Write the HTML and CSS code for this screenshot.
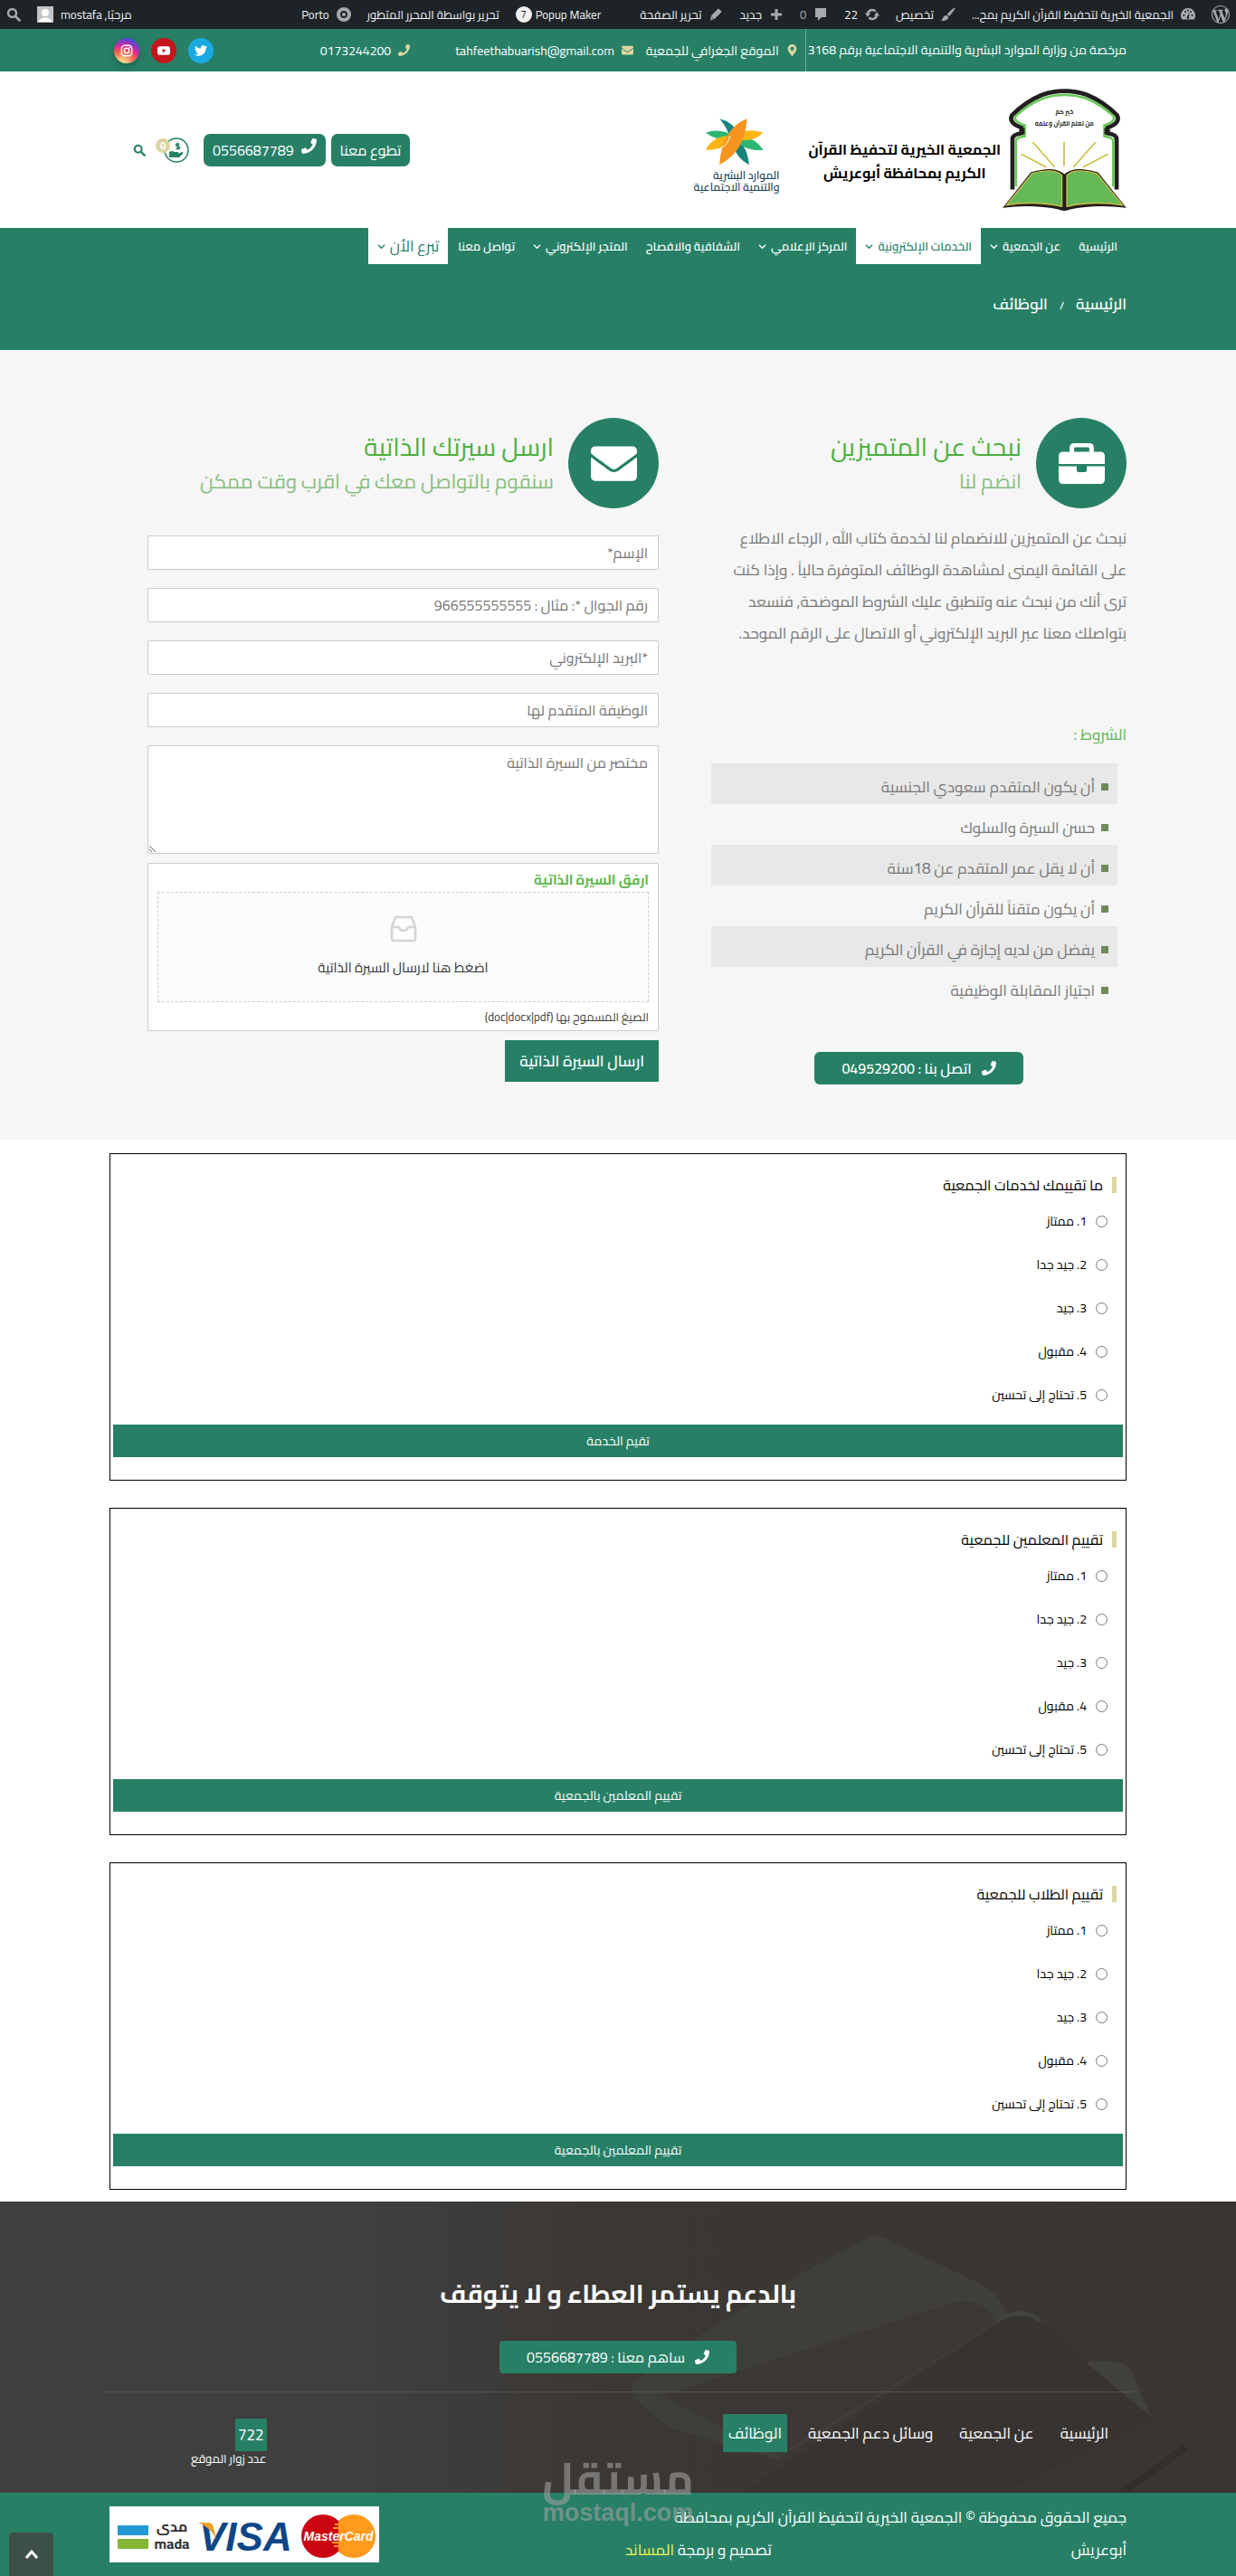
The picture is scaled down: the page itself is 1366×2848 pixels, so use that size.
FILE: index.html
```
<!DOCTYPE html>
<html lang="ar" dir="rtl">
<head>
    <meta charset="utf-8">
    <meta name="viewport" content="width=device-width, initial-scale=1">
    <title>الوظائف - الجمعية الخيرية لتحفيظ القرآن الكريم</title>
    <link rel="stylesheet" href="styles.css">
</head>
<body>
    <svg class="sprite" aria-hidden="true">
        <symbol id="i-phone" viewBox="0 0 512 512"><path d="M493.4 24.6l-104-24c-11.3-2.6-22.9 3.3-27.5 13.9l-48 112c-4.2 9.8-1.4 21.3 6.9 28l60.6 49.6c-36 76.7-98.9 140.5-177.2 177.2l-49.6-60.6c-6.8-8.3-18.2-11.1-28-6.9l-112 48C3.9 366.5-2 378.1.6 389.4l24 104C27.1 504.2 36.7 512 48 512c256.1 0 464-207.5 464-464 0-11.2-7.7-20.9-18.6-23.4z"/></symbol>
        <symbol id="i-mail" viewBox="0 0 512 512"><path d="M502.3 190.8c3.9-3.1 9.7-.2 9.7 4.7V400c0 26.5-21.5 48-48 48H48c-26.5 0-48-21.5-48-48V195.6c0-5 5.7-7.8 9.7-4.7 22.4 17.4 52.1 39.5 154.1 113.6 21.1 15.4 56.7 47.8 92.2 47.6 35.7.3 72-32.8 92.3-47.6 102-74.1 131.6-96.3 154-113.7zM256 320c23.2.4 56.6-29.2 73.4-41.4 132.7-96.3 142.8-104.7 173.4-128.7 5.8-4.5 9.2-11.5 9.2-18.9v-19c0-26.5-21.5-48-48-48H48c-26.5 0-48 21.5-48 48v19c0 7.4 3.4 14.3 9.2 18.9 30.6 23.9 40.7 32.4 173.4 128.7 16.8 12.2 50.2 41.8 73.4 41.4z"/></symbol>
        <symbol id="i-down" viewBox="0 0 10 10"><path d="M1 3l4 4 4-4" fill="none" stroke="currentColor" stroke-width="1.5"/></symbol>
        <symbol id="i-search" viewBox="0 0 16 16"><circle cx="6.5" cy="6.5" r="4.5" fill="none" stroke="currentColor" stroke-width="2.4"/><path d="M10 10l4.5 4.5" stroke="currentColor" stroke-width="2.8" stroke-linecap="round"/></symbol>
    </svg>

    <div class="adminbar">
        <a href="#" aria-label="ووردبريس"><svg class="ic20" viewBox="0 0 20 20"><path d="M20 10c0-5.510-4.490-10-10-10C4.480 0 0 4.490 0 10c0 5.520 4.480 10 10 10 5.510 0 10-4.480 10-10zM7.780 15.370L4.370 6.220c.550-.020 1.170-.080 1.170-.080.500-.060.440-1.130-.060-1.110 0 0-1.450.110-2.370.110-.180 0-.370 0-.580-.010C4.120 2.690 6.870 1.110 10 1.110c2.330 0 4.450.870 6.050 2.340-.680-.110-1.650.390-1.650 1.580 0 .740.450 1.360.900 2.100.350.610.550 1.360.550 2.460 0 1.490-1.400 5-1.400 5l-3.030-8.370c.540-.020.820-.170.820-.170.500-.050.440-1.250-.060-1.220 0 0-1.440.120-2.380.120-.870 0-2.330-.120-2.330-.120-.500-.030-.560 1.200-.060 1.220l.920.080 1.260 3.410zM17.410 10c.240-.640.740-1.870.430-4.250.700 1.290 1.050 2.710 1.050 4.250 0 3.290-1.730 6.240-4.400 7.780.970-2.590 1.940-5.200 2.920-7.780zM6.100 18.090C3.120 16.650 1.110 13.530 1.110 10c0-1.300.230-2.480.720-3.590C3.250 10.300 4.670 14.200 6.100 18.090zm4.030-6.630l2.580 6.980c-.860.290-1.760.450-2.710.450-.790 0-1.570-.110-2.290-.330.810-2.380 1.620-4.740 2.420-7.100z"/></svg></a>
        <a href="#"><svg class="ic" viewBox="0 0 16 16"><path d="M8 1a8 8 0 0 0-6.600 12.500h13.200A8 8 0 0 0 8 1z"/><g fill="#1d2327"><circle cx="3.500" cy="9" r="1"/><circle cx="5" cy="5" r="1"/><circle cx="8" cy="3.500" r="1"/><circle cx="11" cy="5" r="1"/><circle cx="12.500" cy="9" r="1"/><path d="M9.500 5.500L9 11a1.300 1.300 0 1 1-2-.500z"/></g></svg>الجمعية الخيرية لتحفيظ القرآن الكريم بمح...</a>
        <a href="#"><svg class="ic" viewBox="0 0 16 16"><path d="M15.500.500c.8.800-4 7-6.500 9.500L6.500 8C9 5 14.700-.300 15.500.500zM5.800 8.800l2.400 2.200C8 14 4 15.500 0 15c2-1.500 2-5.500 5.800-6.200z"/></svg>تخصيص</a>
        <a href="#"><svg class="ic" viewBox="0 0 16 16"><path d="M3 7a5 5 0 0 1 8.500-2.500M13 9a5 5 0 0 1-8.500 2.500" fill="none" stroke="currentColor" stroke-width="2.600"/><path d="M0 6.500h6L3 11zM10 9.500h6L13 5z"/></svg>22</a>
        <a class="dim" href="#"><svg class="ic" viewBox="0 0 16 16"><path d="M2 1h12v10H9l-4 4v-4H2z"/></svg>0</a>
        <a href="#"><svg class="ic" viewBox="0 0 16 16"><path d="M6.500 2h3v4.500H14v3H9.500V14h-3V9.500H2v-3h4.500z"/></svg>جديد</a>
        <a href="#"><svg class="ic" viewBox="0 0 16 16"><path d="M11 1l4 4-8 8-5.500 2L3 9zM4 11l1.500 1.500" stroke="#1d2327" stroke-width=".6"/></svg>تحرير الصفحة</a>
        <a class="popup" href="#">Popup Maker<span class="num">7</span></a>
        <a href="#">تحرير بواسطة المحرر المتطور</a>
        <a href="#"><svg class="ic" viewBox="0 0 16 16"><circle cx="8" cy="8" r="6" fill="none" stroke="currentColor" stroke-width="4"/><circle cx="8" cy="8" r="2"/></svg>Porto</a>
        <a class="me" href="#">مرحبًا, mostafa<svg class="avatar" viewBox="0 0 18 18"><path d="M0 0h18v18H0z" fill="#c3c4c7"/><circle cx="9" cy="7" r="4" fill="#fff"/><path d="M2 17c0-6 14-6 14 0z" fill="#fff"/></svg></a>
        <a href="#" aria-label="بحث"><svg class="ic"><use href="#i-search"/></svg></a>
    </div>

    <div class="topbar">
        <div class="wrap topbar-row">
            <span class="licence">مرخصة من وزارة الموارد البشرية والتنمية الاجتماعية برقم 3168</span>
            <a class="place" href="#"><svg viewBox="0 0 384 512"><path d="M172.268 501.670C26.970 291.031 0 269.413 0 192 0 85.961 85.961 0 192 0s192 85.961 192 192c0 77.413-26.970 99.031-172.268 309.670-9.535 13.774-29.930 13.773-39.464 0zM192 272c44.183 0 80-35.817 80-80s-35.817-80-80-80-80 35.817-80 80 35.817 80 80 80z"/></svg>الموقع الجغرافي للجمعية</a>
            <a class="email" href="#"><svg><use href="#i-mail"/></svg>tahfeethabuarish@gmail.com</a>
            <a class="tel" href="#"><svg><use href="#i-phone"/></svg>0173244200</a>
            <div class="social">
                <a class="tw" href="#" aria-label="تويتر"><svg viewBox="0 0 512 512"><path d="M459.370 151.716c.325 4.548.325 9.097.325 13.645 0 138.720-105.583 298.558-298.558 298.558-59.452 0-114.680-17.219-161.137-47.106 8.447.974 16.568 1.299 25.340 1.299 49.055 0 94.213-16.568 130.274-44.832-46.132-.975-84.792-31.188-98.112-72.772 6.498.974 12.995 1.624 19.818 1.624 9.421 0 18.843-1.300 27.614-3.573-48.081-9.747-84.143-51.980-84.143-102.985v-1.299c13.969 7.797 30.214 12.670 47.431 13.319-28.264-18.843-46.781-51.005-46.781-87.391 0-19.492 5.197-37.360 14.294-52.954 51.655 63.675 129.300 105.258 216.365 109.807-1.624-7.797-2.599-15.918-2.599-24.040 0-57.828 46.782-104.934 104.934-104.934 30.213 0 57.502 12.670 76.670 33.137 23.715-4.548 46.456-13.320 66.599-25.340-7.798 24.366-24.366 44.833-46.132 57.827 21.117-2.273 41.584-8.122 60.426-16.243-14.292 20.791-32.161 39.308-52.628 54.253z"/></svg></a>
                <a class="yt" href="#" aria-label="يوتيوب"><svg viewBox="0 0 16 16"><rect x="0" y="2.500" width="16" height="11" rx="3"/><path d="M6.500 5.500v5l4-2.500z" fill="#c4161c"/></svg></a>
                <a class="ig" href="#" aria-label="انستقرام"><svg viewBox="0 0 16 16"><rect x="1.500" y="1.500" width="13" height="13" rx="4" fill="none" stroke="#fff" stroke-width="1.600"/><circle cx="8" cy="8" r="3.200" fill="none" stroke="#fff" stroke-width="1.600"/><circle cx="11.800" cy="4.200" r="1"/></svg></a>
            </div>
        </div>
    </div>

    <header class="header">
        <div class="wrap header-row">
            <a href="#" aria-label="الجمعية الخيرية لتحفيظ القرآن الكريم"><svg class="logo" viewBox="0 0 405 400">
                <path d="M32 330V165Q32 150 62 146V128Q18 112 30 88Q75 42 130 20Q202-4 275 20Q330 42 375 88Q387 112 343 128V146Q373 150 373 165V330" fill="#fff" stroke="#231f20" stroke-width="14"/>
                <path d="M43 320V172Q43 160 72 156V120Q32 106 42 90Q85 50 134 31Q202 10 271 31Q320 50 363 90Q373 106 333 120V156Q362 160 362 172V320" fill="none" stroke="#6ac95b" stroke-width="8"/>
                <path d="M54 134l18-6v22l-18-5zM351 134l-18-6v22l18-5z" fill="#231f20"/>
                <path d="M201 175v79M98 175l72 82M304 175l-72 82M60 214l82 43M345 214l-82 43" stroke="#cdbf45" stroke-width="5"/>
                <path d="M0 390L92 274Q170 250 202 280Q234 250 312 274L405 390Q300 378 218 396Q202 404 186 396Q100 378 0 390z" fill="#231f20"/>
                <path d="M12 382L96 278Q170 258 194 284V386Q100 366 12 382zM393 382L308 278Q234 258 210 284V386Q300 366 393 382z" fill="#65b959" stroke="#cdbf45" stroke-width="4"/>
                <text x="202" y="82" text-anchor="middle" class="logo-text">خير كم</text>
                <text x="202" y="120" text-anchor="middle" class="logo-text">من تعلم القرآن وعلمه</text>
            </svg></a>
            <div class="name">الجمعية الخيرية لتحفيظ القرآن<br>الكريم بمحافظة أبوعريش</div>
            <div class="ministry">
                <svg viewBox="0 0 196 158">
                    <path d="M49 1Q95 12 120 60L88 74Q74 30 49 1zM92 80Q138 70 148 156Q100 130 92 80z" fill="#17847c"/>
                    <path d="M2 48Q50 30 100 60Q50 84 2 48zM98 68Q160 50 195 106Q130 110 98 68z" fill="#2cb673"/>
                    <path d="M2 106Q30 50 100 60Q80 104 2 106zM100 68Q130 26 195 48Q160 84 100 68z" fill="#fdb515"/>
                    <path d="M140 1Q56 36 48 156Q136 110 140 1z" fill="#f7941e"/>
                    <path d="M56 98Q76 88 84 58" fill="none" stroke="#fff" stroke-width="3"/>
                </svg>
                <p>الموارد البشرية<br>والتنمية الاجتماعية</p>
            </div>
            <div class="actions">
                <a class="btn" href="#">تطوع معنا</a>
                <a class="btn call" href="#"><svg><use href="#i-phone"/></svg>0556687789</a>
                <a class="cart" href="#" aria-label="سلة التبرعات"><svg viewBox="0 0 28 28"><circle cx="14" cy="14" r="13" fill="#fff" stroke="#278066" stroke-width="1.500"/><path d="M6 16q3-2 6 0h4q1 2-1 2h-3 4l4-2q2 0 1 2l-4 4H6z"/><path d="M17.500 7.500q-4-1.500-4 .800 0 1.200 2 1.500 2.200.300 2.200 1.500 0 2-4.200.700M15.500 5.500v8" fill="none" stroke="#278066" stroke-width="1.500"/></svg><span>0</span></a>
                <button class="find" type="button" aria-label="بحث"><svg><use href="#i-search"/></svg></button>
            </div>
        </div>
    </header>

    <nav class="nav">
        <div class="wrap nav-row">
            <a href="#">الرئيسية</a>
            <a href="#">عن الجمعية<svg><use href="#i-down"/></svg></a>
            <a class="on" href="#">الخدمات الإلكترونية<svg><use href="#i-down"/></svg></a>
            <a href="#">المركز الإعلامي<svg><use href="#i-down"/></svg></a>
            <a href="#">الشفافية والافصاح</a>
            <a href="#">المتجر الإلكتروني<svg><use href="#i-down"/></svg></a>
            <a href="#">تواصل معنا</a>
            <a class="on donate" href="#">تبرع الأن<svg><use href="#i-down"/></svg></a>
        </div>
    </nav>
    <div class="crumbs">
        <div class="wrap"><a href="#">الرئيسية</a><span>/</span>الوظائف</div>
    </div>

    <section class="jobs">
        <div class="wrap jobs-grid">
            <div>
                <div class="lead">
                    <span class="circle"><svg viewBox="0 0 512 450"><path d="M340 95V60q0-15-15-15H187q-15 0-15 15v35h-50V50q0-50 50-50h168q50 0 50 50v45h72q50 0 50 50v85H0v-85q0-50 50-50h72zM0 255h200v45q0 20 20 20h72q20 0 20-20v-45h200v145q0 50-50 50H50q-50 0-50-50z"/></svg></span>
                    <div>
                        <h2>نبحث عن المتميزين</h2>
                        <h3>انضم لنا</h3>
                    </div>
                </div>
                <p class="about">نبحث عن المتميزين للانضمام لنا لخدمة كتاب الله , الرجاء الاطلاع على القائمة اليمنى لمشاهدة الوظائف المتوفرة حالياً . وإذا كنت ترى أنك من نبحث عنه وتنطبق عليك الشروط الموضحة, فنسعد بتواصلك معنا عبر البريد الإلكتروني أو الاتصال على الرقم الموحد.</p>
                <h4>الشروط :</h4>
                <ul class="terms">
                    <li>أن يكون المتقدم سعودي الجنسية</li>
                    <li>حسن السيرة والسلوك</li>
                    <li>أن لا يقل عمر المتقدم عن 18سنة</li>
                    <li>أن يكون متقناً للقرآن الكريم</li>
                    <li>يفضل من لديه إجازة في القرآن الكريم</li>
                    <li>اجتياز المقابلة الوظيفية</li>
                </ul>
                <a class="phone-btn" href="#"><svg><use href="#i-phone"/></svg>اتصل بنا : 049529200</a>
            </div>
            <div>
                <div class="lead">
                    <span class="circle"><svg><use href="#i-mail"/></svg></span>
                    <div>
                        <h2>ارسل سيرتك الذاتية</h2>
                        <h3>سنقوم بالتواصل معك في اقرب وقت ممكن</h3>
                    </div>
                </div>
                <form class="cv">
                    <input type="text" aria-label="الإسم" placeholder="الإسم*">
                    <input type="text" aria-label="رقم الجوال" placeholder="رقم الجوال *: مثال : 966555555555">
                    <input type="text" aria-label="البريد الإلكتروني" placeholder="*البريد الإلكتروني">
                    <input type="text" aria-label="الوظيفة المتقدم لها" placeholder="الوظيفة المتقدم لها">
                    <textarea aria-label="مختصر من السيرة الذاتية" placeholder="مختصر من السيرة الذاتية"></textarea>
                    <div class="upload">
                        <strong>ارفق السيرة الذاتية</strong>
                        <label class="drop" for="cv">
                            <svg viewBox="0 0 30 30"><path d="M2 13L6 2h18l4 11v13q0 2-2 2H4q-2 0-2-2zM2 13h8q1 4 5 4t5-4h8" fill="none" stroke="#d4d4d4" stroke-width="2.600" stroke-linejoin="round"/></svg>
                            اضغط هنا لارسال السيرة الذاتية
                        </label>
                        <input type="file" id="cv" hidden>
                        <small>الصيغ المسموح بها (doc|docx|pdf)</small>
                    </div>
                    <button type="button">ارسال السيرة الذاتية</button>
                </form>
            </div>
        </div>
    </section>

    <main class="wrap polls">
        <form class="poll">
            <h5>ما تقييمك لخدمات الجمعية</h5>
            <label><input type="radio" name="p1">1. ممتاز</label>
            <label><input type="radio" name="p1">2. جيد جدا</label>
            <label><input type="radio" name="p1">3. جيد</label>
            <label><input type="radio" name="p1">4. مقبول</label>
            <label><input type="radio" name="p1">5. تحتاج إلى تحسين</label>
            <button type="button">تقيم الخدمة</button>
        </form>
        <form class="poll">
            <h5>تقييم المعلمين للجمعية</h5>
            <label><input type="radio" name="p2">1. ممتاز</label>
            <label><input type="radio" name="p2">2. جيد جدا</label>
            <label><input type="radio" name="p2">3. جيد</label>
            <label><input type="radio" name="p2">4. مقبول</label>
            <label><input type="radio" name="p2">5. تحتاج إلى تحسين</label>
            <button type="button">تقييم المعلمين بالجمعية</button>
        </form>
        <form class="poll">
            <h5>تقييم الطلاب للجمعية</h5>
            <label><input type="radio" name="p3">1. ممتاز</label>
            <label><input type="radio" name="p3">2. جيد جدا</label>
            <label><input type="radio" name="p3">3. جيد</label>
            <label><input type="radio" name="p3">4. مقبول</label>
            <label><input type="radio" name="p3">5. تحتاج إلى تحسين</label>
            <button type="button">تقييم المعلمين بالجمعية</button>
        </form>
    </main>

    <footer class="footer">
        <div class="support">
            <svg class="scene" viewBox="0 0 1366 322" preserveAspectRatio="xMidYMid slice" aria-hidden="true">
                <path d="M700 200Q820 110 968 36Q1040 70 1090 94Q1115 115 1113 128L860 285 740 250Q690 215 700 200z" fill="#424440" opacity=".6"/>
                <path d="M730 215L1060 110Q1095 112 1100 135L860 280z" fill="#3a3532" opacity=".7"/>
                <path d="M1113 128Q1130 118 1160 140L1275 240 1110 322H820z" fill="#373331"/>
                <path d="M1200 178Q1240 170 1252 190L1272 238z" fill="#42413e"/>
                <path d="M1105 130Q1130 116 1150 132" fill="none" stroke="#42423f" stroke-width="5"/>
                <path d="M1240 322L1310 272" stroke="#322e2c" stroke-width="8"/>
            </svg>
            <h2>بالدعم يستمر العطاء و لا يتوقف</h2>
            <a class="phone-btn" href="#"><svg><use href="#i-phone"/></svg>ساهم معنا : 0556687789</a>
            <div class="wrap support-row">
                <nav>
                    <a href="#">الرئيسية</a>
                    <a href="#">عن الجمعية</a>
                    <a href="#">وسائل دعم الجمعية</a>
                    <a class="on" href="#">الوظائف</a>
                </nav>
                <div class="visits"><b>722</b><span>عدد زوار الموقع</span></div>
            </div>
        </div>
        <div class="rights">
            <div class="wrap rights-row">
                <div class="copy">
                    <div>جميع الحقوق محفوظة © الجمعية الخيرية لتحفيظ القرآن الكريم بمحافظة</div>
                    <div class="copy-2"><span>أبوعريش</span><span>تصميم و برمجة <a href="#">المساند</a></span></div>
                </div>
                <svg class="pay" viewBox="0 0 298 62" direction="ltr">
                    <path d="M0 0h298v62H0z" fill="#fff"/>
                    <path d="M9 21h34v11H9z" fill="#2599d6"/>
                    <path d="M9 36h34v11H9z" fill="#83b735"/>
                    <text x="69" y="28" text-anchor="middle" class="mada">مدى</text>
                    <text x="69" y="47" text-anchor="middle" class="mada">mada</text>
                    <text x="99" y="49" class="visa">VISA</text>
                    <path d="M98 18h12q4 1 5 5l3 14Q113 24 98 18z" fill="#f0a028"/>
                    <circle cx="270" cy="33" r="24" fill="#ff9a1e"/>
                    <circle cx="236" cy="33" r="24" fill="#cc0512"/>
                    <path d="M253 16a24 24 0 0 1 0 34z" fill="#ff9a1e"/>
                    <path d="M249 20h8M247 24h10M246 40h11M248 44h9" stroke="#ff9a1e" stroke-width="2"/>
                    <text x="253" y="38" text-anchor="middle" class="mc">MasterCard</text>
                </svg>
            </div>
        </div>
        <div class="mark"><b>مستقل</b><span>mostaql.com</span></div>
    </footer>
    <a class="totop" href="#" aria-label="إلى الأعلى"><svg viewBox="0 0 16 12"><path d="M2 10l6-7 6 7" fill="none" stroke="#fff" stroke-width="3"/></svg></a>
</body>
</html>
```
FILE: styles.css
```
*{
    box-sizing: border-box;
}
body{
    margin: 0;
    font-family: Cairo, Roboto, "DejaVu Sans Condensed", sans-serif;
    font-size: 14px;
    color: #777;
    background-color: #fff;
}
h2, h3, h4, h5, p, ul{
    margin: 0;
    padding: 0;
    font-weight: 400;
}
a{
    color: inherit;
    text-decoration: none;
}
svg{
    fill: currentColor;
    flex-shrink: 0;
}
input, textarea, button{
    font-family: inherit;
}
.sprite{
    display: none;
}
.wrap{
    max-width: 1124px;
    margin: 0 auto;
}

/* admin bar */
.adminbar{
    display: flex;
    align-items: center;
    height: 32px;
    padding: 0 7px;
    gap: 18px;
    font-size: 13px;
    color: #f0f0f1;
    background-color: #1d2327;
}
.adminbar a{
    display: flex;
    align-items: center;
    gap: 8px;
}
.adminbar svg{
    color: #a7aaad;
}
.ic{
    width: 16px;
    height: 16px;
}
.ic20{
    width: 20px;
    height: 20px;
}
.dim{
    color: #a7aaad;
}
.adminbar .popup{
    gap: 4px;
    margin-right: 25px;
}
.num{
    width: 18px;
    height: 18px;
    line-height: 18px;
    border-radius: 50%;
    text-align: center;
    font-size: 11px;
    color: #1d2327;
    background-color: #f0f0f1;
}
.me{
    margin-right: auto;
}
.avatar{
    width: 18px;
    height: 18px;
}

/* top bar */
.topbar{
    color: #fff;
    background-color: #278066;
}
.topbar-row{
    display: flex;
    align-items: center;
    height: 47px;
    font-size: 14px;
}
.topbar-row > a{
    display: flex;
    align-items: center;
    gap: 8px;
}
.topbar-row > a svg{
    width: 13px;
    height: 13px;
    color: #dcd5a0;
}
.licence{
    padding-left: 2px;
    border-left: 1px solid #6fab98;
    line-height: 47px;
}
.place{
    padding: 0 8px 0 14px;
}
.email{
    padding-left: 50px;
}
.social{
    display: flex;
    gap: 13px;
    margin: 0 auto 0 5px;
}
.social a{
    display: flex;
    align-items: center;
    justify-content: center;
    width: 28px;
    height: 28px;
    border-radius: 50%;
}
.social svg{
    width: 14px;
    height: 14px;
}
.tw{
    background-color: #1aa9e1;
}
.yt{
    background-color: #c4161c;
}
.ig{
    background: radial-gradient(circle at 30% 107%, #fdf497 0%, #fdf497 5%, #fd5949 45%, #d6249f 60%, #285aeb 90%);
    box-shadow: 0 3px 10px rgba(0,0,0,.25);
}

/* header */
.header-row{
    display: flex;
    align-items: center;
    height: 173px;
}
.logo{
    display: block;
    width: 137px;
    height: 135px;
}
.logo-text{
    font-size: 20px;
    font-weight: 700;
    fill: #231f20;
}
.name{
    margin-right: 2px;
    padding-top: 24px;
    font-size: 16px;
    font-weight: 700;
    line-height: 26px;
    text-align: center;
    color: #000;
}
.ministry{
    margin-right: 32px;
    padding-top: 12px;
    text-align: right;
}
.ministry svg{
    display: block;
    width: 65px;
    height: 52px;
    margin: 0 17px 4px 0;
}
.ministry p{
    font-size: 12px;
    font-weight: 600;
    line-height: 13px;
    color: #17435a;
}
.actions{
    display: flex;
    align-items: center;
    gap: 6px;
    margin-right: auto;
    padding-left: 26px;
}
.btn{
    display: flex;
    gap: 8px;
    height: 36px;
    padding: 0 10px;
    border-radius: 7px;
    font-size: 16px;
    line-height: 36px;
    color: #fff;
    background-color: #278066;
}
.call svg{
    width: 17px;
    height: 17px;
    margin-top: 5px;
}
.cart{
    position: relative;
    margin-right: 10px;
    color: #278066;
}
.cart svg{
    display: block;
    width: 28px;
    height: 28px;
}
.cart span{
    position: absolute;
    top: 1px;
    left: -9px;
    width: 16px;
    height: 16px;
    border-radius: 50%;
    font-size: 11px;
    font-weight: 700;
    line-height: 16px;
    text-align: center;
    color: #fff;
    background-color: #dcd5a0;
}
.find{
    display: flex;
    margin-right: 14px;
    padding: 0;
    border: 0;
    color: #278066;
    background: none;
}
.find svg{
    width: 14px;
    height: 14px;
}

/* menu */
.nav, .crumbs{
    color: #fff;
    background-color: #278066;
}
.nav-row{
    display: flex;
    height: 40px;
}
.nav-row a{
    display: flex;
    align-items: center;
    gap: 5px;
    padding: 0 10px;
    font-size: 13px;
    font-weight: 600;
}
.nav-row svg{
    width: 9px;
    height: 9px;
}
.nav-row .on{
    color: #278066;
    background-color: #fff;
}
.nav-row .donate{
    margin-right: 1px;
    font-size: 17px;
    font-weight: 400;
}
.crumbs{
    height: 95px;
    padding-top: 29px;
    font-size: 17px;
    font-weight: 600;
    line-height: 30px;
}
.crumbs span{
    margin: 0 13px;
    font-size: 12px;
}

/* jobs */
.jobs{
    padding: 75px 0 61px;
    background-color: #f6f6f6;
}
.jobs-grid{
    display: grid;
    grid-template-columns: 459fr 565fr;
    gap: 58px;
    padding-left: 42px;
}
.lead{
    display: flex;
    align-items: center;
    gap: 16px;
}
.circle{
    display: flex;
    align-items: center;
    justify-content: center;
    width: 100px;
    height: 100px;
    border-radius: 50%;
    color: #fff;
    background-color: #278066;
}
.circle svg{
    width: 51px;
    height: 51px;
}
.lead h2{
    font-size: 28px;
    line-height: 40px;
    color: #4caf3d;
}
.lead h3{
    font-size: 22px;
    line-height: 36px;
    color: #87bd7e;
}
.about{
    margin-top: 16px;
    padding-left: 9px;
    font-size: 17px;
    line-height: 35px;
}
.jobs h4{
    margin: 82px 0 20px;
    font-size: 17px;
    line-height: 24px;
    color: #5cb84c;
}
.terms{
    margin-right: 10px;
    list-style: none;
}
.terms li{
    display: flex;
    align-items: center;
    gap: 7px;
    height: 45px;
    padding: 6px 10px 0;
    font-size: 17px;
}
.terms li:nth-child(odd){
    background-color: #e8e8e8;
}
.terms li::before{
    content: "";
    width: 8px;
    height: 8px;
    background-color: #6f8a5c;
}
.phone-btn{
    display: flex;
    align-items: center;
    justify-content: center;
    gap: 11px;
    width: fit-content;
    height: 36px;
    margin: 49px auto 0;
    padding: 0 30px;
    border-radius: 6px;
    font-size: 16px;
    color: #fff;
    background-color: #278066;
}
.phone-btn svg{
    width: 16px;
    height: 16px;
}
.jobs .phone-btn{
    font-weight: 600;
}
.cv{
    display: flex;
    flex-direction: column;
    align-items: flex-start;
    margin-top: 30px;
}
.cv input, .cv textarea, .upload{
    width: 100%;
    border: 1px solid #ccc;
    border-radius: 1px;
    background-color: #fff;
}
.cv input, .cv textarea{
    padding: 0 11px;
    font-size: 16px;
}
.cv input{
    height: 38px;
    margin-bottom: 20px;
}
.cv textarea{
    height: 120px;
    margin-bottom: 10px;
    padding-top: 3px;
}
.cv ::placeholder{
    color: #777;
}
.upload{
    height: 186px;
    margin-bottom: 10px;
    padding: 5px 10px;
}
.upload strong{
    display: block;
    font-size: 15px;
    line-height: 26px;
    color: #5cb84c;
}
.drop{
    display: flex;
    flex-direction: column;
    align-items: center;
    gap: 14px;
    height: 122px;
    padding-top: 25px;
    border: 1px dashed #ccc;
    font-size: 15px;
    line-height: 28px;
    color: #333;
    background-color: #fcfcfc;
}
.drop svg{
    width: 30px;
    height: 30px;
}
.upload small{
    display: block;
    font-size: 13px;
    line-height: 32px;
    color: #444;
}
.cv button{
    height: 46px;
    padding: 0 16px;
    border: 0;
    font-size: 17px;
    font-weight: 600;
    color: #fff;
    background-color: #278066;
}

/* polls */
.polls{
    display: flex;
    flex-direction: column;
    gap: 30px;
    padding: 15px 0 13px;
}
.poll{
    display: flex;
    flex-direction: column;
    padding: 25px 3px;
    border: 1px solid #000;
    color: #000;
}
.poll h5{
    margin: 0 7px 7px;
    padding-right: 10px;
    border-right: 5px solid #dcd5a0;
    font-size: 16px;
    line-height: 18px;
}
.poll label{
    display: flex;
    align-items: center;
    height: 48px;
    padding: 0 17px;
    font-size: 14px;
}
.poll input{
    width: 13px;
    height: 13px;
    margin: 0 0 0 10px;
}
.poll button{
    height: 36px;
    margin-top: 9px;
    border: 0;
    font-size: 14px;
    color: #fff;
    background-color: #278066;
}

/* footer */
.footer{
    position: relative;
    color: #fff;
}
.support{
    position: relative;
    padding: 80px 20px 45px;
    text-align: center;
    background: linear-gradient(to left, #393532, #3b3733 50%, #3f3f3f 70%);
}
.scene{
    position: absolute;
    top: 0;
    left: 0;
    width: 100%;
    height: 100%;
}
.support h2, .support .phone-btn, .support-row{
    position: relative;
}
.support h2{
    font-size: 28px;
    font-weight: 700;
    line-height: 44px;
}
.support .phone-btn{
    margin: 30px auto 20px;
    border-radius: 4px;
}
.support-row{
    display: flex;
    justify-content: space-between;
    max-width: 1140px;
    padding: 24px 22px 0 98px;
    border-top: 1px solid #525250;
    text-align: right;
}
.support-row nav{
    display: flex;
    gap: 17px;
    font-size: 17px;
    line-height: 42px;
}
.support-row nav a{
    padding: 0 6px;
}
.support-row .on{
    background-color: #278066;
}
.visits{
    display: flex;
    flex-direction: column;
    align-items: flex-start;
    height: 42px;
    padding-top: 5px;
}
.visits b{
    padding: 0 3px;
    font-size: 17px;
    font-weight: 400;
    line-height: 36px;
    background-color: #278066;
}
.visits span{
    font-size: 13px;
    line-height: 16px;
}
.rights{
    background-color: #278066;
}
.rights-row{
    display: flex;
    justify-content: space-between;
    align-items: flex-start;
    padding: 9px 0 11px;
}
.copy{
    width: 554px;
    font-size: 17px;
    line-height: 36px;
}
.copy-2{
    display: flex;
    justify-content: space-between;
}
.copy a{
    color: #f5f35c;
}
.pay{
    width: 298px;
    height: 62px;
    margin-top: 6px;
}
.mada{
    font-size: 16px;
    font-weight: 700;
    fill: #333;
}
.visa{
    font-family: "Liberation Sans", sans-serif;
    font-size: 44px;
    font-weight: 700;
    font-style: italic;
    fill: #0e4687;
}
.mc{
    font-family: "Liberation Sans", sans-serif;
    font-size: 14px;
    font-weight: 700;
    font-style: italic;
    fill: #fff;
}
.mark{
    position: absolute;
    right: 0;
    bottom: 57px;
    left: 0;
    display: flex;
    flex-direction: column;
    align-items: center;
    color: rgba(160,160,160,.6);
    pointer-events: none;
}
.mark b{
    font-size: 49px;
    line-height: 50px;
}
.mark span{
    font-family: "Liberation Sans", sans-serif;
    font-size: 27px;
    font-weight: 700;
    line-height: 26px;
}
.totop{
    position: fixed;
    bottom: 0;
    left: 10px;
    display: flex;
    align-items: center;
    justify-content: center;
    width: 49px;
    height: 48px;
    border-radius: 4px 4px 0 0;
    background-color: #3d5048;
}
.totop svg{
    width: 16px;
    height: 12px;
}
```
